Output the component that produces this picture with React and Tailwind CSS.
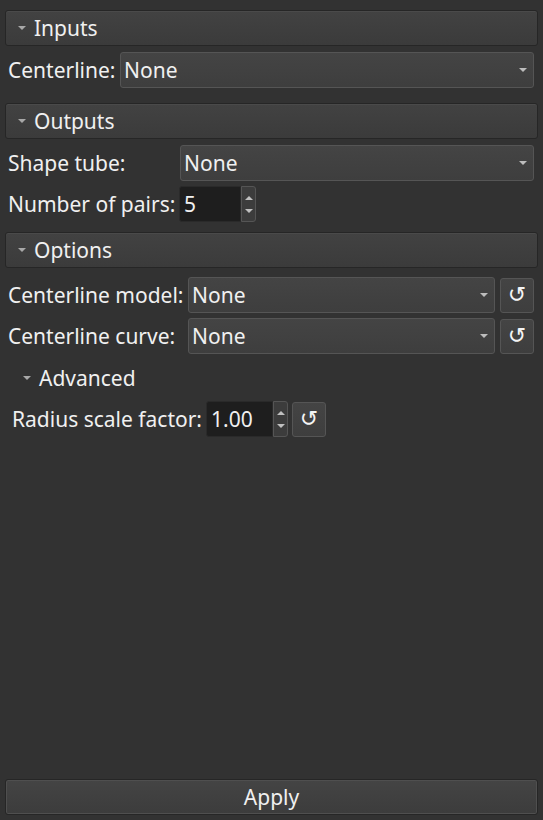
const FONT = "font-['Noto_Sans','Open_Sans',sans-serif]";

function Caret({ className = "" }) {
  return (
    <svg width="8" height="4" viewBox="0 0 8 4" className={className}>
      <path d="M0 0H8L4 4Z" fill="currentColor" />
    </svg>
  );
}

function Header({ title }) {
  return (
    <div className="flex h-9 items-center rounded-[3px] border border-[#262626] bg-gradient-to-b from-[#424242] to-[#3b3b3b] pl-[12px] shadow-[inset_0_1px_0_#4a4a4a]">
      <Caret className="text-[#a8a8a8]" />
      <span className="ml-[8px] text-[#f0f0f0]">{title}</span>
    </div>
  );
}

function Combo({ value = "None", className = "" }) {
  return (
    <div
      className={
        "flex h-9 items-center justify-between rounded-[3px] border border-[#555555] bg-gradient-to-b from-[#444444] to-[#3e3e3e] pl-[3px] pr-[6px] " +
        className
      }
    >
      <span className="text-[#f0f0f0]">{value}</span>
      <Caret className="text-[#bdbdbd]" />
    </div>
  );
}

function Spin({ value, width }) {
  return (
    <div className={"flex h-9 shrink-0 " + width}>
      <div className="flex flex-1 items-center rounded-l-[3px] border border-[#2a2a2a] bg-[#1e1e1e] pl-1 text-[#f0f0f0]">
        {value}
      </div>
      <div className="flex w-[15px] flex-col items-center justify-center gap-[9px] rounded-r-[3px] border border-[#555555] bg-[#3c3c3c]">
        <svg width="8" height="4" viewBox="0 0 8 4">
          <path d="M0 4H8L4 0Z" fill="#c0c0c0" />
        </svg>
        <svg width="8" height="4" viewBox="0 0 8 4">
          <path d="M0 0H8L4 4Z" fill="#c0c0c0" />
        </svg>
      </div>
    </div>
  );
}

function Reset() {
  return (
    <div className="flex h-[35px] w-[34px] shrink-0 items-center justify-center rounded-[3px] border border-[#555555] bg-gradient-to-b from-[#444444] to-[#3e3e3e] font-['DejaVu_Sans',sans-serif] text-[22px] text-[#f4f4f4]">
      ↺
    </div>
  );
}

function Label({ children, width = "" }) {
  return <span className={"shrink-0 whitespace-nowrap text-[#f0f0f0] " + width}>{children}</span>;
}

export default function App() {
  return (
    <div className={"flex h-[820px] w-[543px] flex-col bg-[#323232] px-[5px] text-[21px] leading-none " + FONT}>
      <div className="mt-[10px]">
        <Header title="Inputs" />
      </div>
      <div className="mt-[6px] flex items-center pl-[3px] pr-[4px]">
        <Label width="w-[112px]">Centerline:</Label>
        <Combo className="flex-1" />
      </div>

      <div className="mt-[15px]">
        <Header title="Outputs" />
      </div>
      <div className="mt-[6px] flex items-center pl-[3px] pr-[4px]">
        <Label width="w-[172px]">Shape tube:</Label>
        <Combo className="flex-1" />
      </div>
      <div className="mt-[5px] flex items-center pl-[3px] pr-[4px]">
        <Label width="w-[171px]">Number of pairs:</Label>
        <Spin value="5" width="w-[77px]" />
      </div>

      <div className="mt-[10px]">
        <Header title="Options" />
      </div>
      <div className="mt-[9px] flex items-center gap-[5px] pl-[3px] pr-[4px]">
        <Label width="w-[175px]">Centerline model:</Label>
        <Combo className="flex-1" />
        <Reset />
      </div>
      <div className="mt-[5px] flex items-center gap-[5px] pl-[3px] pr-[4px]">
        <Label width="w-[175px]">Centerline curve:</Label>
        <Combo className="flex-1" />
        <Reset />
      </div>
      <div className="mt-[6px] flex h-9 items-center pl-[18px]">
        <Caret className="text-[#a8a8a8]" />
        <span className="ml-[8px] text-[#f0f0f0]">Advanced</span>
      </div>
      <div className="mt-[5px] flex items-center gap-[4px] pl-[7px]">
        <Label>Radius scale factor:</Label>
        <Spin value="1.00" width="w-[82px]" />
        <Reset />
      </div>

      <div className="flex-1" />
      <div className="mb-[5px] flex h-9 items-center justify-center rounded-[3px] border border-[#262626] bg-gradient-to-b from-[#444444] to-[#3c3c3c] text-[#f0f0f0] shadow-[inset_0_0_0_1px_#4f4f4f]">
        Apply
      </div>
    </div>
  );
}
